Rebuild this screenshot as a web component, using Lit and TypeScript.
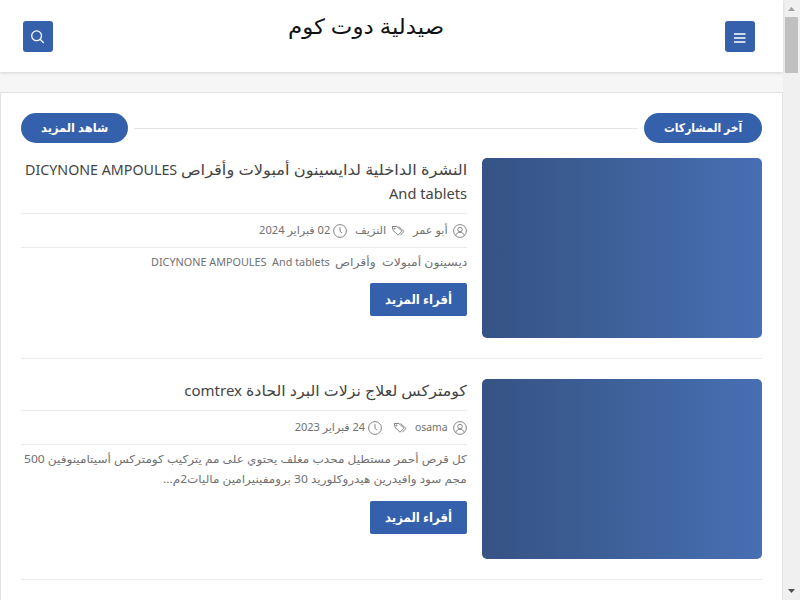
import { LitElement, html, css, svg } from 'lit';
import { customElement, property } from 'lit/decorators.js';

interface Post {
  title: string[][];
  author: string[];
  label: string[];
  date: string[];
  snippet: string[][];
}

// Every run of text is followed by the width of its column slot in pixels.
const POSTS: Post[] = [
  {
    title: [['النشرة الداخلية لدايسينون أمبولات وأقراص', '286'], ['DICYNONE AMPOULES', '152'], ['And tablets', '78']],
    author: ['أبو عمر', '35'],
    label: ['النزيف', '31'],
    date: ['02 فبراير 2024', '71'],
    snippet: [['ديسينون أمبولات  وأقراص', '132'], ['DICYNONE AMPOULES  And tablets', '179']],
  },
  {
    title: [['كومتركس لعلاج نزلات البرد الحادة', '221'], ['comtrex', '58']],
    author: ['osama', '33'],
    label: [],
    date: ['24 فبراير 2023', '70'],
    snippet: [
      ['كل قرص أحمر مستطيل محدب مغلف يحتوي على مم يتركيب كومتركس أسيتامينوفين 500', '443'],
      ['مجم سود وافيدرين هيدروكلوريد 30 برومفينيرامين ماليات2م...', '304'],
    ],
  },
];

const userIcon = svg`<circle cx="7" cy="7" r="6.4"/><circle cx="7" cy="5.6" r="2.3"/><path d="M2.8 11.6c.5-2.2 2-3.3 4.2-3.3s3.7 1.1 4.2 3.3"/>`;
const tagIcon = svg`<path d="M1.3 2.5h4.6l5 4.7-3.8 4-5-4.8z"/><path d="M7.6 2.5l5.4 4.9-3.7 3.9"/><circle cx="3.6" cy="4.6" r=".5"/>`;
const clockIcon = svg`<circle cx="7" cy="7" r="6.4"/><path d="M7 3.2v4.1l2 1.7"/>`;

@customElement('fit-text')
class FitText extends LitElement {
  @property({ type: Number }) width = 0;
  @property() text = '';

  static styles = css`
    :host {
      display: inline-block;
      white-space: pre;
      direction: rtl;
    }

    span {
      display: inline-block;
      transform-origin: right center;
    }
  `;

  updated() {
    const span = this.renderRoot.querySelector('span')!;
    this.style.width = `${this.width}px`;
    span.style.transform = `scaleX(${this.width / span.offsetWidth})`;
  }

  render() {
    return html`<span>${this.text}</span>`;
  }
}

const fit = ([text, width]: string[]) => html`<fit-text .text=${text} .width=${Number(width)}></fit-text>`;

@customElement('blog-post')
class BlogPost extends LitElement {
  @property({ attribute: false }) post!: Post;

  static styles = css`
    :host {
      display: flex;
      gap: 15px;
      padding-bottom: 20px;
      margin-bottom: 20px;
      border-bottom: 1px solid #ebebeb;
    }

    .thumb {
      flex: none;
      width: 280px;
      height: 180px;
      border-radius: 5px;
      background: linear-gradient(to left, #486fb3, #355383);
    }

    .body {
      flex: 1;
      min-width: 0;
    }

    .title {
      display: flex;
      flex-wrap: wrap;
      column-gap: 4px;
      margin: -1px 0 0;
      padding-bottom: 8px;
      font-size: 15px;
      font-weight: 400;
      line-height: 24px;
      color: #444;
    }

    .meta {
      display: flex;
      align-items: center;
      box-sizing: border-box;
      height: 35px;
      border: solid #ebebeb;
      border-width: 1px 0;
      font-size: 11px;
      line-height: 20px;
      color: #707070;
    }

    .item {
      display: flex;
      align-items: center;
      gap: 5px;
      margin-left: 8px;
    }

    .item fit-text {
      margin-bottom: 2px;
    }

    .item svg {
      width: 14px;
      height: 14px;
      fill: none;
      stroke: #777;
      stroke-width: 0.9;
    }

    .empty {
      margin-right: -2px;
    }

    .date {
      gap: 3px;
    }

    .snippet {
      display: flex;
      flex-wrap: wrap;
      column-gap: 5px;
      margin: 4px 0 11px;
      font-size: 11px;
      line-height: 20.4px;
      color: #707070;
    }

    .more {
      display: flex;
      align-items: center;
      justify-content: center;
      box-sizing: border-box;
      width: 97px;
      height: 33px;
      padding-bottom: 1px;
      border-radius: 2px;
      background: #3560ab;
      color: #fff;
      font-size: 13px;
      font-weight: 700;
      line-height: 20px;
    }
  `;

  render() {
    const { title, author, label, date, snippet } = this.post;
    return html`
      <div class="thumb"></div>
      <div class="body">
        <h2 class="title">${title.map(fit)}</h2>
        <div class="meta">
          <div class="item"><svg viewBox="0 0 14 14">${userIcon}</svg>${fit(author)}</div>
          <div class="item"><svg viewBox="0 0 14 14">${tagIcon}</svg>${label.length ? fit(label) : html`<span class="empty"></span>`}</div>
          <div class="item date"><svg viewBox="0 0 14 14">${clockIcon}</svg>${fit(date)}</div>
        </div>
        <div class="snippet">${snippet.map(fit)}</div>
        <div class="more">${fit(['أقراء المزيد', '67'])}</div>
      </div>
    `;
  }
}

@customElement('app-root')
class AppRoot extends LitElement {
  static styles = css`
    :host {
      display: flex;
      flex-direction: row-reverse;
      direction: rtl;
      width: 800px;
      height: 600px;
      overflow: hidden;
      background: #f6f6f6;
      font-family: 'Noto Sans', 'DejaVu Sans', sans-serif;
    }

    .page {
      width: 783px;
    }

    header {
      display: flex;
      justify-content: space-between;
      box-sizing: border-box;
      height: 72px;
      padding: 21px 28px 0 23px;
      background: #fff;
      box-shadow: 0 1px 3px rgba(0, 0, 0, 0.14);
    }

    .button {
      display: flex;
      align-items: center;
      justify-content: center;
      width: 30px;
      height: 31px;
      border-radius: 3px;
      background: #3560ab;
    }

    .button svg {
      width: 16px;
      height: 16px;
      fill: none;
      stroke: #fff;
      stroke-width: 1.3;
    }

    h1 {
      margin: -11px 46px 0 0;
      font-size: 21px;
      font-weight: 400;
      line-height: 32px;
      color: #111;
    }

    main {
      box-sizing: border-box;
      height: 600px;
      margin-top: 20px;
      padding: 20px;
      border: 1px solid #e2e2e2;
      background: #fff;
    }

    .heading {
      display: flex;
      align-items: center;
      gap: 6px;
      margin-bottom: 15px;
    }

    .pill {
      display: flex;
      align-items: center;
      justify-content: center;
      box-sizing: border-box;
      height: 30px;
      padding: 0 20px;
      border-radius: 15px;
      background: #3560ab;
      color: #fff;
      font-size: 12px;
      font-weight: 700;
      line-height: 20px;
    }

    .rule {
      flex: 1;
      height: 1px;
      background: #e5e5e5;
    }

    .scrollbar {
      display: flex;
      flex-direction: column;
      align-items: center;
      width: 17px;
      height: 600px;
      background: #f0f0f0;
    }

    .scrollbar svg {
      width: 17px;
      height: 17px;
    }

    .thumb {
      flex: none;
      width: 13px;
      height: 56px;
      margin-bottom: auto;
      background: #c0c0c0;
    }
  `;

  render() {
    return html`
      <div class="page">
        <header>
          <div class="button">
            <svg viewBox="0 0 16 16"><path d="M2 5h11.5M2 9h11.5M2 13h11.5"/></svg>
          </div>
          <h1>${fit(['صيدلية دوت كوم', '156'])}</h1>
          <div class="button">
            <svg viewBox="0 0 16 16"><circle cx="6.6" cy="6.8" r="4.9"/><path d="M10.1 10.3l3.7 3.7"/></svg>
          </div>
        </header>
        <main>
          <div class="heading">
            <div class="pill">${fit(['آخر المشاركات', '78'])}</div>
            <div class="rule"></div>
            <div class="pill">${fit(['شاهد المزيد', '67'])}</div>
          </div>
          ${POSTS.map((post) => html`<blog-post .post=${post}></blog-post>`)}
        </main>
      </div>
      <div class="scrollbar">
        <svg viewBox="0 0 17 17"><path d="M5 11h7L8.5 7z" fill="#a0a0a0"/></svg>
        <div class="thumb"></div>
        <svg viewBox="0 0 17 17"><path d="M5 6h7l-3.5 4z" fill="#505050"/></svg>
      </div>
    `;
  }
}
